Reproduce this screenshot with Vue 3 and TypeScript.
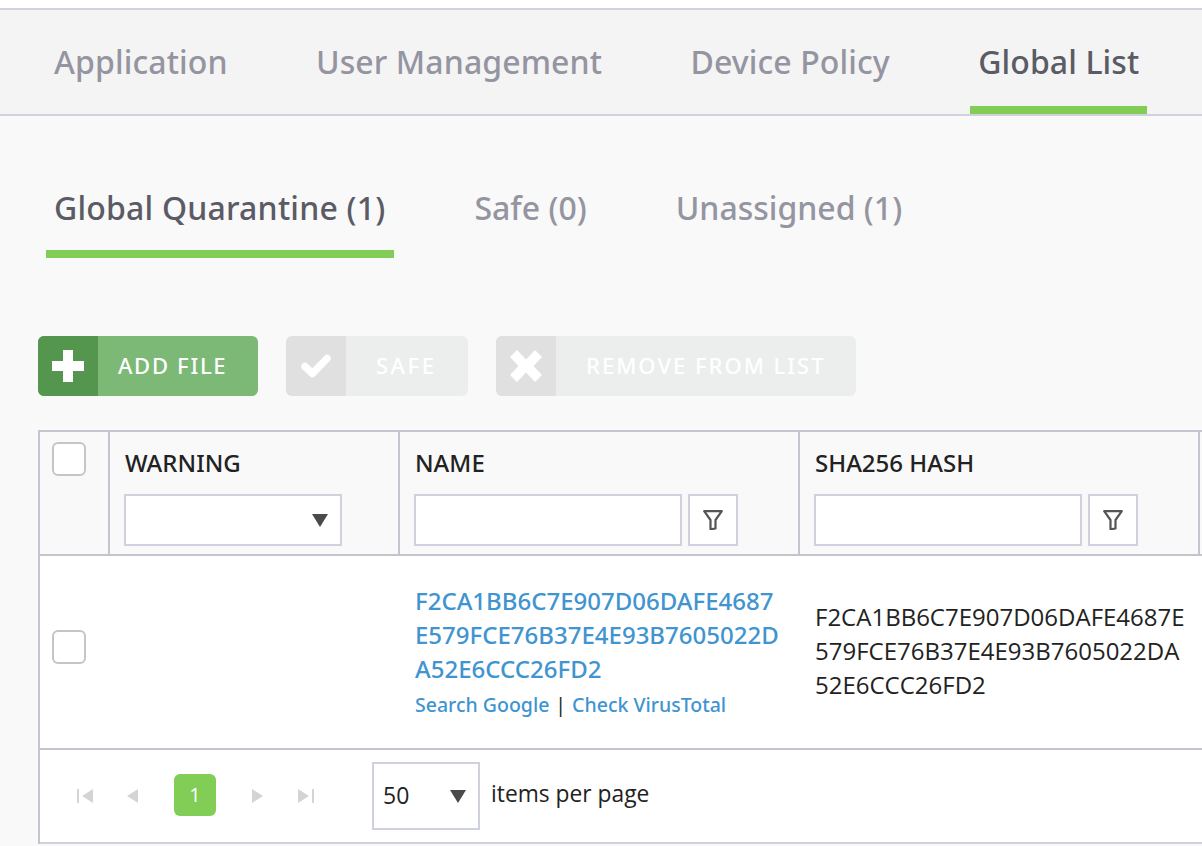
<template>
  <div class="page">
    <nav class="main-tabs">
      <a v-for="tab in mainTabs" :key="tab" :class="['main-tab', { active: tab === 'Global List' }]">{{ tab }}</a>
    </nav>

    <div class="content">
      <nav class="sub-tabs">
        <a v-for="tab in subTabs" :key="tab" :class="['sub-tab', { active: tab === subTabs[0] }]">{{ tab }}</a>
      </nav>

      <div class="actions">
        <button class="action add">
          <span class="action-icon">
            <svg width="32" height="32" viewBox="0 0 32 32"><path d="M11 0h10v11h11v10H21v11H11V21H0V11h11z" fill="#fff" /></svg>
          </span>
          <span class="action-label">ADD FILE</span>
        </button>
        <button class="action safe">
          <span class="action-icon">
            <svg width="30" height="24" viewBox="0 0 30 24"><path d="M4 12.500l7.500 7L26 4.500" fill="none" stroke="#fff" stroke-width="7.500" stroke-linejoin="round" stroke-linecap="round" /></svg>
          </span>
          <span class="action-label">SAFE</span>
        </button>
        <button class="action remove">
          <span class="action-icon">
            <svg width="32" height="32" viewBox="0 0 32 32"><path d="M7 0l9 9.500L25 0l7 7-8.500 9L32 25l-7 7-9-9.500L7 32l-7-7 8.500-9L0 7z" fill="#fff" /></svg>
          </span>
          <span class="action-label">REMOVE FROM LIST</span>
        </button>
      </div>

      <div class="grid">
        <div class="grid-row head">
          <div class="cell check-cell top"><span class="checkbox"></span></div>
          <div class="cell warning-col">
            <div class="col-title">WARNING</div>
            <div class="select-box warning-select"><span class="caret"></span></div>
          </div>
          <div class="cell name-col">
            <div class="col-title">NAME</div>
            <div class="filter">
              <span class="text-box"></span>
              <span class="filter-btn">
                <svg width="20" height="20" viewBox="0 0 20 20"><path d="M1.200 1.200h17.600L12.500 10v8.500l-5 .8V10z" fill="none" stroke="#555" stroke-width="2.200" stroke-linejoin="round" /></svg>
              </span>
            </div>
          </div>
          <div class="cell hash-col">
            <div class="col-title">SHA256 HASH</div>
            <div class="filter">
              <span class="text-box"></span>
              <span class="filter-btn">
                <svg width="20" height="20" viewBox="0 0 20 20"><path d="M1.200 1.200h17.600L12.500 10v8.500l-5 .8V10z" fill="none" stroke="#555" stroke-width="2.200" stroke-linejoin="round" /></svg>
              </span>
            </div>
          </div>
          <div class="cell rest"></div>
        </div>

        <div class="grid-row body">
          <div class="cell check-cell"><span class="checkbox"></span></div>
          <div class="cell warning-col"></div>
          <div class="cell name-col">
            <a class="file-name">{{ hash }}</a>
            <div class="links">
              <a>Search Google</a><span class="sep">|</span><a>Check VirusTotal</a>
            </div>
          </div>
          <div class="cell hash-col hash-text">{{ hash }}</div>
          <div class="cell rest"></div>
        </div>

        <div class="pager">
          <div class="pager-nav">
            <svg class="first" width="16" height="14" viewBox="0 0 16 14"><path d="M0 0h2v14H0zM16 0v14L5 7z" fill="#d6d3d4" /></svg>
            <svg class="prev" width="11" height="14" viewBox="0 0 11 14"><path d="M11 0v14L0 7z" fill="#d6d3d4" /></svg>
            <span class="page-current">1</span>
            <svg class="next" width="11" height="14" viewBox="0 0 11 14"><path d="M0 0v14l11-7z" fill="#d6d3d4" /></svg>
            <svg class="last" width="16" height="14" viewBox="0 0 16 14"><path d="M14 0h2v14h-2zM0 0v14l11-7z" fill="#d6d3d4" /></svg>
          </div>
          <div class="select-box size-select">
            <span class="size-value">50</span><span class="caret"></span>
          </div>
          <span class="per-page">items per page</span>
        </div>
      </div>
    </div>
  </div>
</template>

<script setup lang="ts">
const mainTabs = ['Application', 'User Management', 'Device Policy', 'Global List'];
const subTabs = ['Global Quarantine (1)', 'Safe (0)', 'Unassigned (1)'];
const hash = 'F2CA1BB6C7E907D06DAFE4687E579FCE76B37E4E93B7605022DA52E6CCC26FD2';
</script>

<style>
html,
body {
  margin: 0;
  overflow: hidden;
  background: #f9f9f9;
}
</style>

<style scoped>
.page {
  width: 1202px;
  height: 846px;
  overflow: hidden;
  background: #f9f9f9;
  font-family: "Open Sans", "Noto Sans", sans-serif;
  color: #222;
  border-top: 8px solid #fff;
  box-sizing: border-box;
}

.main-tabs {
  display: flex;
  height: 104px;
  padding-left: 46px;
  background: #f4f4f4;
  border-top: 2px solid #cfd1de;
  border-bottom: 2px solid #cfd1de;
}

.main-tab {
  height: 96px;
  padding: 0 8px;
  margin-right: 72.400px;
  border-bottom: 8px solid transparent;
  font-family: "Noto Sans", sans-serif;
  font-size: 32px;
  font-weight: 500;
  letter-spacing: 0.100px;
  line-height: 104px;
  color: #9495a1;
}

.main-tab.active {
  color: #5b5b65;
  border-bottom-color: #82cd55;
  margin-right: 0;
}

.content {
  padding-left: 38px;
}

.sub-tabs {
  display: flex;
  padding-left: 8px;
  margin-top: 50px;
}

.sub-tab {
  height: 84px;
  padding: 0 9px 0 8px;
  margin-right: 72px;
  border-bottom: 8px solid transparent;
  font-family: "Noto Sans", sans-serif;
  font-size: 32px;
  font-weight: 500;
  line-height: 84px;
  color: #9495a1;
}

.sub-tab.active {
  color: #5b5b65;
  border-bottom-color: #82cd55;
  letter-spacing: 0.200px;
}

.actions {
  display: flex;
  gap: 28px;
  margin-top: 78px;
}

.action {
  display: flex;
  height: 60px;
  padding: 0;
  border: 0;
  border-radius: 6px;
  overflow: hidden;
  font-family: "Noto Sans", sans-serif;
  color: #fff;
}

.action-icon {
  display: flex;
  align-items: center;
  justify-content: center;
  width: 60px;
}

.action-label {
  font-size: 22px;
  font-weight: 500;
  letter-spacing: 2px;
  line-height: 58px;
}

.add {
  width: 220px;
  background: #7cb977;
}

.add .action-icon {
  background: #55964f;
}

.add .action-label {
  padding-left: 20px;
  letter-spacing: 1.700px;
}

.safe,
.remove {
  background: #eceeed;
}

.safe .action-icon,
.remove .action-icon {
  background: #e0e0e0;
}

.safe {
  width: 182px;
}

.safe .action-label {
  padding-left: 30px;
  letter-spacing: 2.500px;
}

.remove {
  width: 360px;
}

.remove .action-label {
  padding-left: 30px;
}

.grid {
  width: 1220px;
  margin-top: 34px;
  border-top: 2px solid #c5c5cf;
  border-left: 2px solid #c5c5cf;
}

.grid-row {
  display: grid;
  grid-template-columns: 70px 290px 400px 400px 60px;
  border-bottom: 2px solid #c5c5cf;
}

.head {
  height: 122px;
}

.body {
  height: 192px;
  background: #fff;
}

.cell {
  box-sizing: border-box;
  padding: 0 15px;
  border-right: 2px solid #c5c5cf;
}

.body .cell {
  border-right: 0;
}

.check-cell {
  display: flex;
  align-items: flex-start;
  padding: 74px 0 0 12px;
}

.check-cell.top {
  padding-top: 10px;
}

.checkbox {
  box-sizing: border-box;
  width: 34px;
  height: 34px;
  background: #fff;
  border: 2px solid #c5c5c8;
  border-radius: 6px;
}

.col-title {
  margin-top: 12px;
  font-family: "Noto Sans", sans-serif;
  font-size: 24px;
  font-weight: 500;
  line-height: 38px;
  color: #222;
}

.select-box {
  box-sizing: border-box;
  display: flex;
  align-items: center;
  justify-content: space-between;
  background: #fff;
  border: 2px solid #cfd1de;
}

.warning-select {
  justify-content: flex-end;
  width: 218px;
  height: 52px;
  margin-top: 12px;
  margin-left: -1px;
  padding-right: 12px;
}

.caret {
  width: 0;
  height: 0;
  border-top: 13px solid #4a4a4a;
  border-left: 8px solid transparent;
  border-right: 8px solid transparent;
}

.filter {
  display: flex;
  gap: 6px;
  margin-top: 12px;
  margin-left: -1px;
}

.text-box {
  box-sizing: border-box;
  width: 268px;
  height: 52px;
  background: #fff;
  border: 2px solid #cfd1de;
}

.filter-btn {
  box-sizing: border-box;
  display: flex;
  align-items: center;
  justify-content: center;
  width: 50px;
  height: 52px;
  background: #fff;
  border: 2px solid #cfd1de;
}

.name-col {
  padding-right: 20px;
}

.file-name {
  display: block;
  margin-top: 28px;
  font-family: "Noto Sans", sans-serif;
  font-size: 24px;
  font-weight: 500;
  line-height: 34px;
  color: #4094d0;
  word-break: break-all;
}

.links {
  margin-top: 2px;
  font-family: "Noto Sans", sans-serif;
  font-size: 19.500px;
  font-weight: 500;
  line-height: 34px;
  color: #4094d0;
}

.sep {
  margin: 0 6px;
  font-weight: 400;
  color: #222;
}

.hash-text {
  display: flex;
  align-items: center;
  padding-right: 12px;
  padding-bottom: 2px;
  font-size: 24px;
  line-height: 34px;
  color: #222;
  word-break: break-all;
}

.pager {
  display: flex;
  align-items: center;
  height: 92px;
  background: #fff;
  border-bottom: 2px solid #cfd1de;
}

.pager-nav {
  box-sizing: border-box;
  display: flex;
  align-items: center;
  width: 332px;
  padding-left: 37px;
}

.prev {
  margin-left: 34px;
}

.page-current {
  width: 42px;
  height: 42px;
  margin: -2px 0 0 36px;
  background: #82cd55;
  border-radius: 6px;
  font-size: 20px;
  line-height: 42px;
  text-align: center;
  color: #fff;
}

.next {
  margin-left: 36px;
}

.last {
  margin-left: 35px;
}

.size-select {
  width: 108px;
  height: 68px;
  padding: 0 12px 0 9px;
  font-size: 23px;
}

.size-value {
  margin-top: -3px;
}

.per-page {
  margin: -6px 0 0 11px;
  font-size: 22.800px;
  color: #222;
}
</style>
